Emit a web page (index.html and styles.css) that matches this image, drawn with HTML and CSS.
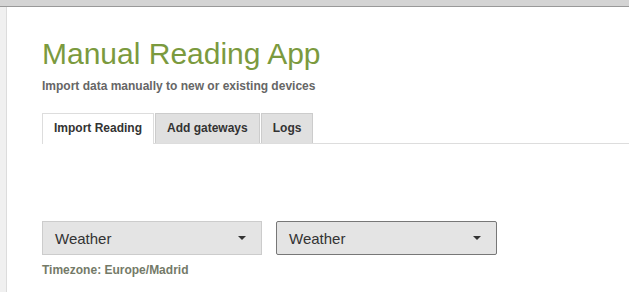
FILE: index.html
```html
<!DOCTYPE html>
<html>
<head>
<meta charset="utf-8">
<link rel="stylesheet" href="styles.css">
</head>
<body>
<div class="topbar"></div>
<div class="layout">
  <div class="sidebar"></div>
  <main class="main">
    <h1 class="title">Manual Reading App</h1>
    <p class="subtitle">Import data manually to new or existing devices</p>
    <div class="tabs">
      <div class="tab active">Import Reading</div>
      <div class="tab">Add gateways</div>
      <div class="tab">Logs</div>
    </div>
    <div class="selects">
      <div class="select">
        <span>Weather</span>
        <span class="caret"></span>
      </div>
      <div class="select focused">
        <span>Weather</span>
        <span class="caret"></span>
      </div>
    </div>
    <p class="tz">Timezone: Europe/Madrid</p>
  </main>
</div>
</body>
</html>
```
FILE: styles.css
```css
html, body {
  margin: 0;
  padding: 0;
  background: #fff;
  font-family: "Liberation Sans", Arial, sans-serif;
  overflow: hidden;
}
.topbar {
  height: 6px;
  background: #d4d4d4;
  border-bottom: 1px solid #999;
}
.layout {
  display: flex;
  height: 285px;
}
.sidebar {
  width: 6px;
  background: #f0f0f0;
  border-right: 1px solid #dcdcdc;
}
.main {
  flex: 1;
  padding-left: 35px;
}
.title {
  margin: 30px 0 0 0;
  font-size: 30px;
  line-height: 34px;
  font-weight: normal;
  color: #7b9a3e;
}
.subtitle {
  margin: 8px 0 0 0;
  font-size: 12px;
  line-height: 14px;
  font-weight: bold;
  color: #666;
}
.tabs {
  display: flex;
  margin-top: 20px;
  border-bottom: 1px solid #ddd;
  height: 30px;
}
.tab {
  font-size: 12px;
  font-weight: bold;
  color: #333;
  padding: 0 11px;
  line-height: 29px;
  background: #e0e0e0;
  border: 1px solid #ccc;
  border-bottom: none;
  margin-right: 1px;
}
.tab.active {
  background: #fff;
  border-color: #ddd;
  height: 30px;
}
.selects {
  display: flex;
  gap: 14px;
  margin-top: 77px;
}
.select {
  background: #e4e4e4;
  border: 1px solid #ccc;
  display: flex;
  align-items: center;
  justify-content: space-between;
  padding: 0 15px 0 12px;
  box-sizing: border-box;
  width: 220px;
  height: 34px;
  font-size: 15px;
  color: #333;
}
.select.focused {
  width: 221px;
  border-color: #777;
  border-radius: 2px;
}
.caret {
  width: 0;
  height: 0;
  border-left: 4px solid transparent;
  border-right: 4px solid transparent;
  border-top: 4px solid #333;
}
.tz {
  margin: 8px 0 0 0;
  font-size: 12px;
  font-weight: bold;
  color: #747a68;
}
```
